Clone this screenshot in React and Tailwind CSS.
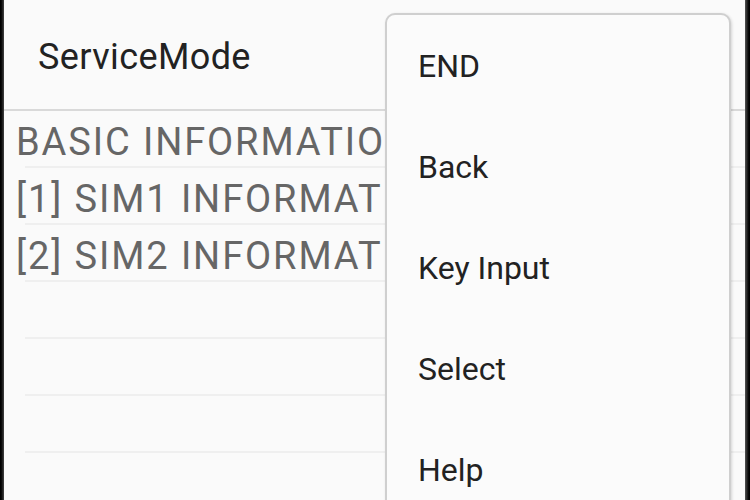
import React from "react";

const rows = ["BASIC INFORMATION", "[1] SIM1 INFORMATION", "[2] SIM2 INFORMATION", "", "", ""];
const menu = ["END", "Back", "Key Input", "Select", "Help"];

export default function App() {
  return (
    <div className="relative flex h-[500px] w-[750px] overflow-hidden bg-[#fafafa] font-['Roboto',sans-serif]">
      <div className="w-[4px] bg-gradient-to-r from-black to-[#444]" />
      <div className="flex flex-1 flex-col">
        <div className="flex h-[111px] items-center border-b-2 border-[#d9d9d9] pl-[34px] pt-[4px]">
          <span className="text-[36px] tracking-[0.4px] text-[#222]">ServiceMode</span>
        </div>
        <div className="flex flex-col">
          {rows.map((row, index) => (
            <div key={index} className="flex h-[57px] flex-col">
              <div className="flex flex-1 items-center whitespace-nowrap pl-[12px] pt-[6px] text-[38px] leading-none tracking-[1.9px] text-[#666]">
                {row}
              </div>
              <div className="ml-[21px] h-[2px] bg-[#efefef]" />
            </div>
          ))}
        </div>
      </div>
      <div className="w-[5px] bg-gradient-to-r from-[#555] to-black" />

      <div className="absolute left-[385px] top-[13px] h-[520px] w-[346px] rounded-[10px] border-2 border-[#cfcfcf] bg-[#fbfbfb] shadow-[1px_1px_3px_rgba(0,0,0,0.15)]">
        {menu.map((item) => (
          <div key={item} className="flex h-[101px] items-center pl-[31px] pt-[1px] text-[32px] text-[#222]">
            {item}
          </div>
        ))}
      </div>
    </div>
  );
}
